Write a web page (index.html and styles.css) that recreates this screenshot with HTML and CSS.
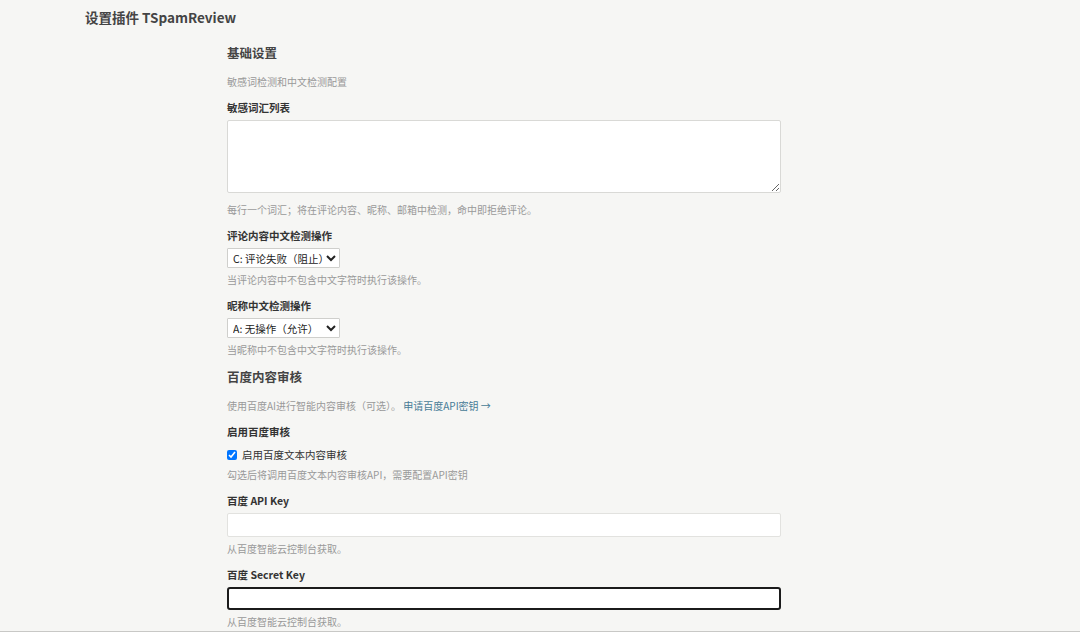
FILE: index.html
```html
<!DOCTYPE html>
<html lang="zh-CN">

<head>
	<meta charset="UTF-8">
	<meta name="viewport" content="width=device-width, initial-scale=1.0">
	<title>设置插件 TSpamReview</title>
	<link rel="stylesheet" href="styles.css">
</head>

<body>

	<div class="page-header">
		<h1 class="page-title">设置插件 TSpamReview</h1>
	</div>

	<form class="settings">
		<!-- 基础设置 -->
		<h2 class="section-title">基础设置</h2>
		<p class="section-desc">敏感词检测和中文检测配置</p>

		<div class="field">
			<label class="field-label">敏感词汇列表</label>
			<textarea class="text-area"></textarea>
			<p class="field-help">每行一个词汇；将在评论内容、昵称、邮箱中检测，命中即拒绝评论。</p>
		</div>

		<div class="field">
			<label class="field-label">评论内容中文检测操作</label>
			<select class="select">
				<option>A: 无操作（允许）</option>
				<option>B: 标记为垃圾</option>
				<option selected>C: 评论失败（阻止）</option>
			</select>
			<p class="field-help">当评论内容中不包含中文字符时执行该操作。</p>
		</div>

		<div class="field">
			<label class="field-label">昵称中文检测操作</label>
			<select class="select">
				<option selected>A: 无操作（允许）</option>
				<option>B: 标记为垃圾</option>
				<option>C: 评论失败（阻止）</option>
			</select>
			<p class="field-help">当昵称中不包含中文字符时执行该操作。</p>
		</div>

		<!-- 百度内容审核 -->
		<h2 class="section-title section-gap">百度内容审核</h2>
		<p class="section-desc">使用百度AI进行智能内容审核（可选）。 <a class="link" href="#">申请百度API密钥 →</a></p>

		<div class="field">
			<label class="field-label">启用百度审核</label>
			<label class="check-row"><input type="checkbox" checked> 启用百度文本内容审核</label>
			<p class="field-help">勾选后将调用百度文本内容审核API，需要配置API密钥</p>
		</div>

		<div class="field">
			<label class="field-label">百度 API Key</label>
			<input class="text-input" type="text">
			<p class="field-help">从百度智能云控制台获取。</p>
		</div>

		<div class="field">
			<label class="field-label">百度 Secret Key</label>
			<input class="text-input is-focused" type="text">
			<p class="field-help">从百度智能云控制台获取。</p>
		</div>
	</form>

	<div class="bottom-line"></div>

</body>

</html>
```

FILE: styles.css
```css
body {
	margin: 0;
	background-color: #f6f6f4;
	color: #333;
	font-family: "Noto Sans CJK SC", "Noto Sans", sans-serif;
}

.page-header {
	padding: 7px 0 0 85px;
}

.page-title {
	margin: 0;
	font-size: 13.5px;
	line-height: 20px;
	font-weight: bold;
	color: #444;
}

.settings {
	width: 554px;
	margin: 16px 0 0 227px;
	padding-bottom: 20px;
}

.section-title {
	margin: 0;
	font-size: 12.5px;
	line-height: 20px;
	font-weight: bold;
	color: #444;
}

.section-gap {
	margin-top: 9px;
}

.section-desc {
	margin: 9px 0 0;
	padding-top: 2px;
	font-size: 10px;
	line-height: 16px;
	color: #999;
}

.link {
	color: #467b96;
	text-decoration: none;
}

.field {
	margin-top: 8px;
}

.field-label {
	display: block;
	margin-bottom: 4px;
	padding-top: 2px;
	font-size: 10.5px;
	line-height: 16px;
	font-weight: bold;
	color: #333;
}

.field-help {
	margin: 2px 0 0;
	padding-top: 2px;
	font-size: 10px;
	line-height: 16px;
	color: #999;
}

.text-area {
	display: block;
	box-sizing: border-box;
	width: 554px;
	height: 73px;
	margin-bottom: 7px;
	border: 1px solid #d9d9d6;
	border-radius: 2px;
	background: #fff;
	resize: vertical;
}

.select {
	display: block;
	box-sizing: border-box;
	width: 113px;
	height: 20px;
	padding: 0 0 0 1px;
	border: 1px solid #cfcfcc;
	border-radius: 1px;
	background: #fff;
	color: #222;
	font-family: "Noto Sans CJK SC", "Noto Sans", sans-serif;
	font-size: 10.5px;
}

.check-row {
	display: flex;
	align-items: center;
	gap: 5px;
	padding-top: 3px;
	font-size: 10.5px;
	line-height: 16px;
	color: #333;
}

.check-row input {
	width: 10px;
	height: 10px;
	margin: 0;
}

.text-input {
	display: block;
	box-sizing: border-box;
	width: 554px;
	height: 24px;
	border: 1px solid #e2e2df;
	border-radius: 2px;
	background: #fff;
}

.text-input.is-focused {
	height: 23px;
	border: 2px solid #1b1b1b;
	border-radius: 3px;
}

.bottom-line {
	position: fixed;
	left: 0;
	right: 0;
	bottom: 0;
	height: 1px;
	background: #c8c8c6;
}
```
